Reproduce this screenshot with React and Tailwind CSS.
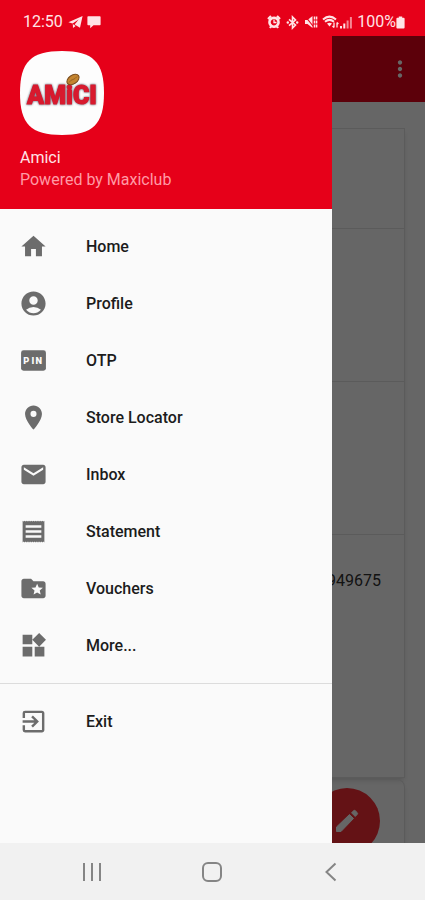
import React from "react";
import {
  MdHome, MdAccountCircle, MdPlace, MdEmail, MdFolderSpecial,
  MdWidgets, MdExitToApp, MdMoreVert,
} from "react-icons/md";

function PinIcon(props) {
  return (
    <svg viewBox="0 0 28 28" {...props}>
      <rect x="2" y="4" width="24" height="20" rx="2.4" fill="currentColor" />
      <text x="4 12 16" y="17" fontSize="9" fontWeight="900" fill="#fafafa" fontFamily="Roboto, 'Liberation Sans', sans-serif">PIN</text>
    </svg>
  );
}

function StatementIcon(props) {
  return (
    <svg viewBox="0 0 24 24" fill="currentColor" {...props}>
      <path
        fillRule="evenodd"
        d="M3 3 l.75 .7 .75 -.7 .75 .7 .75 -.7 .75 .7 .75 -.7 .75 .7 .75 -.7 .75 .7 .75 -.7 .75 .7 .75 -.7 .75 .7 .75 -.7 .75 .7 .75 -.7 .75 .7 .75 -.7 .75 .7 .75 -.7 .75 .7 .75 -.7 .75 .7 .75 -.7 V21 l-.75 -.7 -.75 .7 -.75 -.7 -.75 .7 -.75 -.7 -.75 .7 -.75 -.7 -.75 .7 -.75 -.7 -.75 .7 -.75 -.7 -.75 .7 -.75 -.7 -.75 .7 -.75 -.7 -.75 .7 -.75 -.7 -.75 .7 -.75 -.7 -.75 .7 -.75 -.7 -.75 .7 -.75 -.7 -.75 .7 Z M5.5 6.8 H18.5 V8.8 H5.5 Z M5.5 11 H18.5 V13 H5.5 Z M5.5 15.2 H18.5 V17.2 H5.5 Z"
      />
    </svg>
  );
}

const items = [
  { label: "Home", Icon: MdHome },
  { label: "Profile", Icon: MdAccountCircle },
  { label: "OTP", Icon: PinIcon },
  { label: "Store Locator", Icon: MdPlace },
  { label: "Inbox", Icon: MdEmail },
  { label: "Statement", Icon: StatementIcon },
  { label: "Vouchers", Icon: MdFolderSpecial },
  { label: "More...", Icon: MdWidgets },
];

function StatusBar() {
  return (
    <header className="flex h-9 shrink-0 items-center justify-between bg-[#e60019] pt-2 pr-5 pl-[23px] text-[#ffe3e6]">
      <div className="flex items-center gap-1">
        <span className="text-[16px] leading-5">12:50</span>
        <svg className="ml-px h-[14px] w-[15px]" viewBox="0 0 15 14" fill="currentColor" aria-hidden="true">
          <path d="M14.6 1 L0.4 7.2 L4.6 8.6 L10.6 4.4 L6.6 9.4 L12 12.8 Z M4.8 9 L5 13 L7.6 11 Z" />
        </svg>
        <svg className="h-[14px] w-[14px]" viewBox="0 0 14 14" fill="currentColor" aria-hidden="true">
          <path d="M1.2 1.2 H12.8 Q13.6 1.2 13.6 2 V9.4 Q13.6 10.2 12.8 10.2 H6.5 L3.2 13.2 V10.2 H1.2 Q.4 10.2 .4 9.4 V2 Q.4 1.2 1.2 1.2 Z" />
        </svg>
      </div>
      <div className="flex items-center gap-1">
        <svg className="h-[14px] w-[14px]" viewBox="0 0 14 14" aria-hidden="true">
          <path d="M1 4 L4 1 M13 4 L10 1 M3 13 L4 11.5 M11 13 L10 11.5" stroke="currentColor" strokeWidth="2.2" />
          <path fillRule="evenodd" fill="currentColor" d="M7 1.4 a5.8 5.8 0 1 0 .01 0 Z M7 4 a3.2 3.2 0 1 1 -.01 0 Z" />
          <path d="M7 4.5 V7.5 H9.5" fill="none" stroke="currentColor" strokeWidth="1.3" />
        </svg>
        <svg className="h-[15px] w-[15px]" viewBox="0 0 15 15" aria-hidden="true">
          <path d="M4 4.3 L10.5 10 L7.5 13 V2 L10.5 5 L4 10.7" fill="none" stroke="currentColor" strokeWidth="1.6" />
          <circle cx="2.8" cy="7.5" r="1.2" fill="currentColor" />
          <circle cx="12.2" cy="7.5" r="1.2" fill="currentColor" />
        </svg>
        <svg className="h-[14px] w-[14px]" viewBox="0 0 14 14" aria-hidden="true">
          <path d="M1 5 H3.5 L8.5 1 V13 L3.5 9 H1 Z" fill="currentColor" />
          <path d="M1 1 L9 11" stroke="#e60019" strokeWidth="1.2" />
          <path d="M10.5 1.5 V12.5 M12.6 1.5 V12.5" stroke="currentColor" strokeWidth="1.5" strokeDasharray="3 1" />
        </svg>
        <svg className="h-[14px] w-[17px]" viewBox="0 0 17 14" fill="none" stroke="currentColor" aria-hidden="true">
          <path d="M1 4.4 Q7.5 -1.2 14 4.4 M3 6.8 Q7.5 3 12 6.8" strokeWidth="2" />
          <path d="M5 8.5 Q7.5 6.8 10 8.5 L7.5 11.5 Z" fill="currentColor" stroke="none" />
          <path d="M12 7.5 V12.5 M10.5 11 L12 12.6 M15 12.5 V7.5 M16.4 9 L15 7.5" strokeWidth="1.3" />
        </svg>
        <svg className="-ml-1 h-[13px] w-[14px]" viewBox="0 0 14 13" fill="currentColor" aria-hidden="true">
          <path d="M1 10 h2 v2.5 H1 Z M4.3 7.5 h2 v5 h-2 Z" />
          <path d="M7.6 4.5 h2 v8 h-2 Z M10.9 1 h2 v11.5 h-2 Z" opacity="0.6" />
        </svg>
        <span className="text-[16px] leading-5">100%</span>
        <svg className="-ml-1 h-[13px] w-[9px]" viewBox="0 0 9 13" fill="currentColor" aria-hidden="true">
          <path d="M2.8 .4 H6.2 V1.8 H7.6 Q8.6 1.8 8.6 2.8 V11.4 Q8.6 12.4 7.6 12.4 H1.4 Q.4 12.4 .4 11.4 V2.8 Q.4 1.8 1.4 1.8 H2.8 Z" />
        </svg>
      </div>
    </header>
  );
}

function Logo() {
  return (
    <svg className="h-[84px] w-[84px]" viewBox="0 0 84 84" role="img" aria-label="Amici logo">
      <path d="M42 0 C73 0 84 11 84 42 C84 73 73 84 42 84 C11 84 0 73 0 42 C0 11 11 0 42 0 Z" fill="#fdfdfd" />
      <text
        className="drop-shadow-[0_0_1px_#4a5566]"
        x="42"
        y="53"
        textAnchor="middle"
        fontFamily="Roboto, 'Liberation Sans', sans-serif"
        fontSize="25"
        fontWeight="900"
        fill="#d81a2e"
        stroke="#d81a2e"
        strokeWidth="1"
      >
        AMiCI
      </text>
      <ellipse cx="53" cy="28.5" rx="6.8" ry="4.3" transform="rotate(-35 53 28.5)" fill="#c4852f" stroke="#7b4d1d" strokeWidth="1" />
      <path d="M49 31.5 Q51 28.5 53 28.5 Q55 28 57 25.5" fill="none" stroke="#9a6424" strokeWidth="1" />
    </svg>
  );
}

function DrawerItem({ label, Icon }) {
  return (
    <li>
      <a href="#" className="flex h-[57px] items-center gap-[38px] pr-5 pl-[19px] text-[16px] font-medium text-[#1c1c1c]">
        <Icon className="h-[29px] w-[29px] text-[#6c6c6c]" aria-hidden="true" />
        {label}
      </a>
    </li>
  );
}

function Page() {
  return (
    <main className="flex h-full flex-col bg-white">
      <div className="flex h-[66px] shrink-0 items-center justify-end bg-[#e60019] pr-3 text-white">
        <button type="button" aria-label="More options">
          <MdMoreVert className="h-[26px] w-[26px]" />
        </button>
      </div>
      <div className="mx-5 mt-[26px] divide-y divide-[#e4e4e4] border border-[#e4e4e4] shadow-md">
        <div className="h-[100px]" />
        <div className="h-[153px]" />
        <div className="h-[153px]" />
        <div className="flex h-[242px] justify-end pt-[34px] pr-[23px] text-[16px] leading-6 text-[#303030]">949675</div>
      </div>
      <div className="mx-5 mt-px grow rounded-tr-lg border border-b-0 border-[#e4e4e4] shadow-md" />
    </main>
  );
}

export default function App() {
  return (
    <div className="flex h-screen flex-col overflow-hidden font-[Roboto,'Liberation_Sans',sans-serif]">
      <StatusBar />
      <div className="relative min-h-0 grow overflow-hidden">
        <Page />
        <button type="button" aria-label="Edit" className="absolute right-[45px] -bottom-[11px] flex h-[66px] w-[66px] items-center justify-center rounded-full bg-[#fa2d35] text-white">
          <svg className="h-6 w-6" viewBox="0 0 24 24" fill="currentColor" stroke="currentColor" strokeWidth="1" strokeLinejoin="round" aria-hidden="true">
            <path d="M1.5 22.5 V18 L14.5 5.5 L18.5 9.5 L6 22.5 Z M16.5 3.8 L18.8 1.6 Q19.6 1 20.4 1.8 L22.3 3.7 Q23 4.5 22.3 5.3 L20.3 7.5 Z" />
          </svg>
        </button>
        <div className="absolute inset-0 bg-black/60" />
        <aside className="absolute inset-y-0 left-0 w-[332px] bg-[#fafafa]">
          <div className="h-[173px] bg-[#e60019] px-5 pt-[15px]">
            <Logo />
            <p className="mt-3 text-[16px] leading-[22px] text-[#ffe3e6]">Amici</p>
            <p className="text-[16px] leading-[22px] text-[#ff9aa5]">Powered by Maxiclub</p>
          </div>
          <nav>
            <ul className="border-b border-[#dcdcdc] pt-[9px] pb-[9px]">
              {items.map((item) => (
                <DrawerItem key={item.label} {...item} />
              ))}
            </ul>
            <ul className="pt-[9px]">
              <DrawerItem label="Exit" Icon={MdExitToApp} />
            </ul>
          </nav>
        </aside>
      </div>
      <footer className="flex h-[57px] shrink-0 items-center justify-around bg-[#f1f1f1] px-8 text-[#858585]">
        <button type="button" aria-label="Recent apps">
          <svg className="h-5 w-5" viewBox="0 0 20 20" stroke="currentColor" strokeWidth="2"><path d="M2 1 V19 M10 1 V19 M18 1 V19" /></svg>
        </button>
        <button type="button" aria-label="Home screen">
          <svg className="h-5 w-5" viewBox="0 0 20 20" fill="none" stroke="currentColor" strokeWidth="2"><rect x="1" y="1" width="18" height="18" rx="5" /></svg>
        </button>
        <button type="button" aria-label="Back">
          <svg className="h-5 w-5" viewBox="0 0 20 20" fill="none" stroke="currentColor" strokeWidth="2"><path d="M12.5 1.5 L3.5 10 L12.5 18.5" /></svg>
        </button>
      </footer>
    </div>
  );
}
